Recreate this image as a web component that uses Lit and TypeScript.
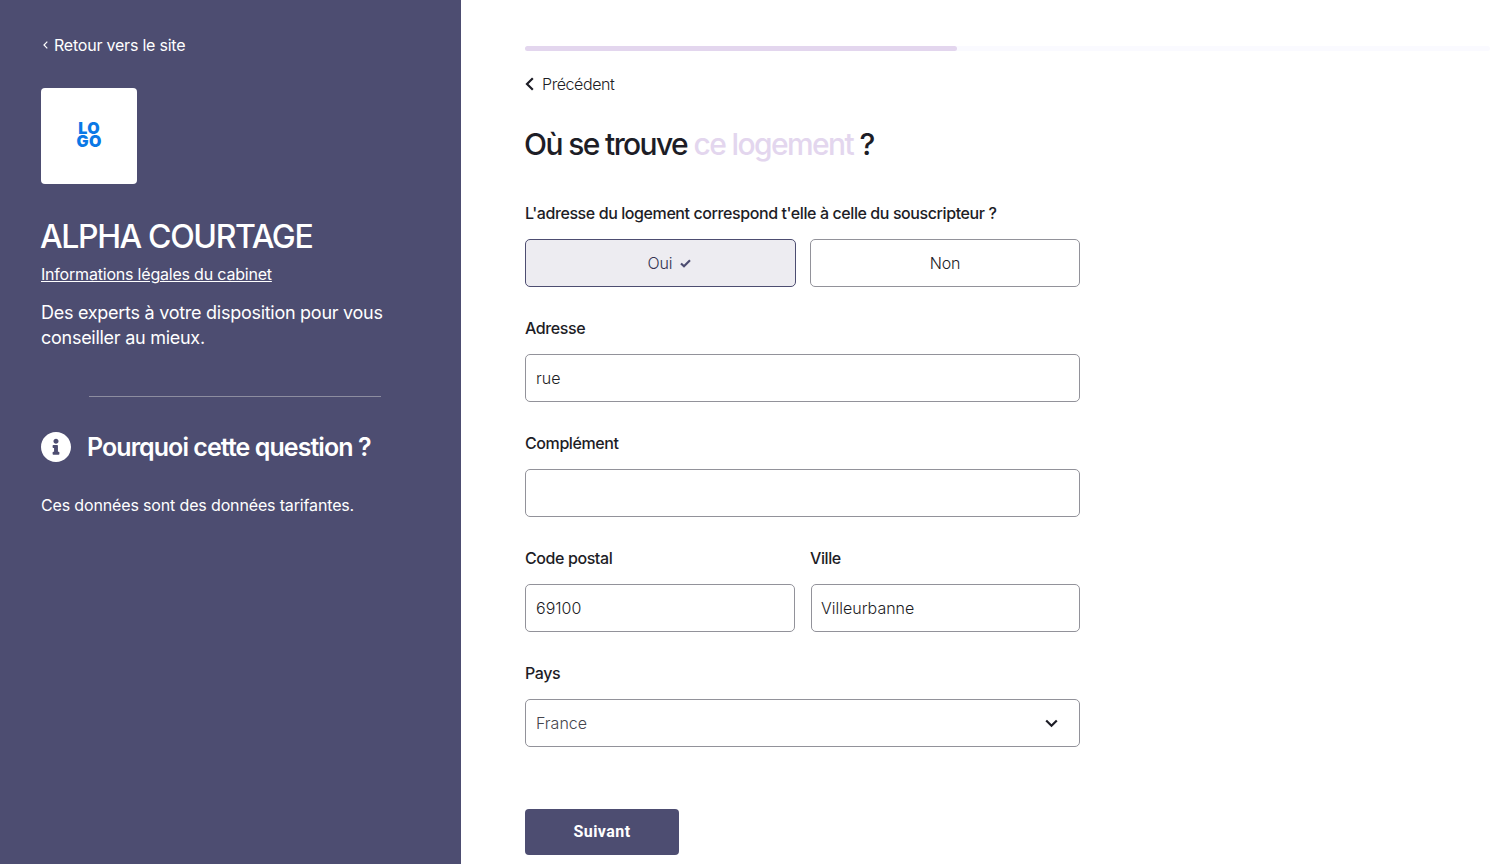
import { LitElement, html, css } from "lit";
import { customElement } from "lit/decorators.js";

@customElement("app-root")
export class AppRoot extends LitElement {
  static styles = css`
    :host { display: flex; height: 864px; overflow: hidden; background: #fff; font-family: Inter, "Noto Sans", sans-serif; color: #1d1d26; }
    * { box-sizing: border-box; }
    .side { width: 461px; flex: none; background: #4d4d71; color: #fff; padding: 35px 0 0 41px; }
    .ret { display: flex; align-items: center; gap: 6px; height: 20px; font-size: 16px; letter-spacing: -0.22px; padding-left: 2px; color: #fff; font-weight: 400; }
    .logo { margin-top: 33px; width: 96px; height: 96px; background: #fff; border-radius: 4px; display: flex; align-items: center; justify-content: center; }
    .logo div { font-weight: 900; font-size: 16px; line-height: 13px; color: #0a78e6; letter-spacing: 0.5px; padding: 0 0 2px 0.5px; text-align: center; }
    h1 { margin: 34px 0 0 -1px; font-size: 32px; line-height: 38px; font-weight: 500; letter-spacing: -1.38px; }
    .legal { display: block; margin-top: 7px; font-size: 16px; line-height: 22px; color: #fff; letter-spacing: -0.2px; text-decoration: underline; }
    .desc { margin: 15px 0 0; font-size: 18px; line-height: 25px; width: 360px; letter-spacing: -0.27px; }
    .sep { margin: 46px 0 0 48px; width: 292px; height: 1px; background: #8d8da0; }
    .why { margin-top: 22px; display: flex; align-items: center; gap: 16px; height: 56px; }
    .why h2 { margin: 0; font-size: 25px; font-weight: 600; letter-spacing: -0.94px; }
    .note { margin: 18px 0 0; font-size: 16px; line-height: 24px; letter-spacing: -0.15px; }
    .main { flex: none; width: 965px; margin-left: 64px; padding-top: 46px; }
    .bar { height: 5px; background: #fafaff; border-radius: 3px; }
    .bar div { width: 432px; height: 5px; background: #e3d6ee; border-radius: 3px; }
    .prev { margin-top: 23px; display: flex; align-items: center; gap: 8px; height: 20px; font-size: 16px; font-weight: 300; letter-spacing: -0.42px; }
    .title { margin: 30px 0 0 -1px; font-size: 30px; line-height: 40px; font-weight: 500; letter-spacing: -1.62px; }
    .title span { color: #e3d6ee; }
    form { width: 555px; margin-top: 37px; display: grid; grid-template-columns: 270px 269px; column-gap: 16px; row-gap: 29px; }
    .full { grid-column: 1 / -1; }
    label { display: block; font-size: 16px; font-weight: 500; line-height: 24px; height: 24px; letter-spacing: -0.41px; margin-bottom: 14px; }
    .ville label { margin-left: -1px; }
    .ville input { padding-left: 9px; }
    .choices { display: grid; grid-template-columns: 271px 270px; column-gap: 14px; }
    .choice { height: 48px; border: 1px solid #92929a; border-radius: 5px; background: #fff; font: 300 16px Inter, sans-serif; color: #1d1d26; display: flex; align-items: center; justify-content: center; gap: 7px; letter-spacing: -0.1px; padding: 0; }
    .choice.on { background: #edecf1; border-color: #4d4d71; color: #33334f; padding-left: 17px; }
    input, .select { display: block; width: 100%; height: 48px; border: 1px solid #92929a; border-radius: 5px; background: #fff; padding: 0 10px; font: 300 16px Inter, sans-serif; color: #1d1d26; outline: none; }
    .select { display: flex; align-items: center; justify-content: space-between; color: #45454d; padding-right: 21px; }
    .actions { margin-top: 62px; }
    .next { width: 154px; height: 46px; border: 0; border-radius: 4px; background: #4d4d71; color: #fff; font: 700 16px Roboto, sans-serif; letter-spacing: 0.45px; padding: 0 0 1px; }
  `;

  render() {
    return html`
      <aside class="side">
        <div class="ret">
          <svg width="5" height="8" viewBox="0 0 5 8" fill="none" stroke="#fff" stroke-width="1.2"><path d="M4.3 .7 1 4l3.3 3.3" /></svg>
          <span>Retour vers le site</span>
        </div>
        <div class="logo"><div>LO<br />GO</div></div>
        <h1>ALPHA COURTAGE</h1>
        <a class="legal">Informations légales du cabinet</a>
        <p class="desc">Des experts à votre disposition pour vous conseiller au mieux.</p>
        <div class="sep"></div>
        <div class="why">
          <svg width="30" height="30" viewBox="8 8 496 496" fill="#fff"><path d="M256 8C119.043 8 8 119.083 8 256c0 136.997 111.043 248 248 248s248-111.003 248-248C504 119.083 392.957 8 256 8zm0 110c23.196 0 42 18.804 42 42s-18.804 42-42 42-42-18.804-42-42 18.804-42 42-42zm56 254c0 6.627-5.373 12-12 12h-88c-6.627 0-12-5.373-12-12v-24c0-6.627 5.373-12 12-12h12v-64h-12c-6.627 0-12-5.373-12-12v-24c0-6.627 5.373-12 12-12h64c6.627 0 12 5.373 12 12v100h12c6.627 0 12 5.373 12 12v24z" /></svg>
          <h2>Pourquoi cette question ?</h2>
        </div>
        <p class="note">Ces données sont des données tarifantes.</p>
      </aside>
      <main class="main">
        <div class="bar"><div></div></div>
        <div class="prev">
          <svg width="9" height="14" viewBox="0 0 9 14" fill="none" stroke="#1d1d26" stroke-width="2.2"><path d="M7.8 1.2 2 7l5.8 5.8" /></svg>
          <span>Précédent</span>
        </div>
        <div class="title">Où se trouve <span>ce logement</span> ?</div>
        <form>
          <div class="full">
            <label>L'adresse du logement correspond t'elle à celle du souscripteur ?</label>
            <div class="choices">
              <button type="button" class="choice on">Oui
                <svg width="11" height="9" viewBox="0 0 11 9" fill="none" stroke="#4d4d71" stroke-width="2.2"><path d="M1 4.5 4 7.3 10 1.3" /></svg>
              </button>
              <button type="button" class="choice">Non</button>
            </div>
          </div>
          <div class="full"><label>Adresse</label><input value="rue" /></div>
          <div class="full"><label>Complément</label><input value="" /></div>
          <div><label>Code postal</label><input value="69100" /></div>
          <div class="ville"><label>Ville</label><input value="Villeurbanne" /></div>
          <div class="full"><label>Pays</label>
            <div class="select"><span>France</span>
              <svg width="13" height="9" viewBox="0 0 13 9" fill="none" stroke="#1d1d26" stroke-width="2.2"><path d="M1.2 1.5 6.5 6.8l5.3-5.3" /></svg>
            </div>
          </div>
        </form>
        <div class="actions"><button type="button" class="next">Suivant</button></div>
      </main>
    `;
  }
}
